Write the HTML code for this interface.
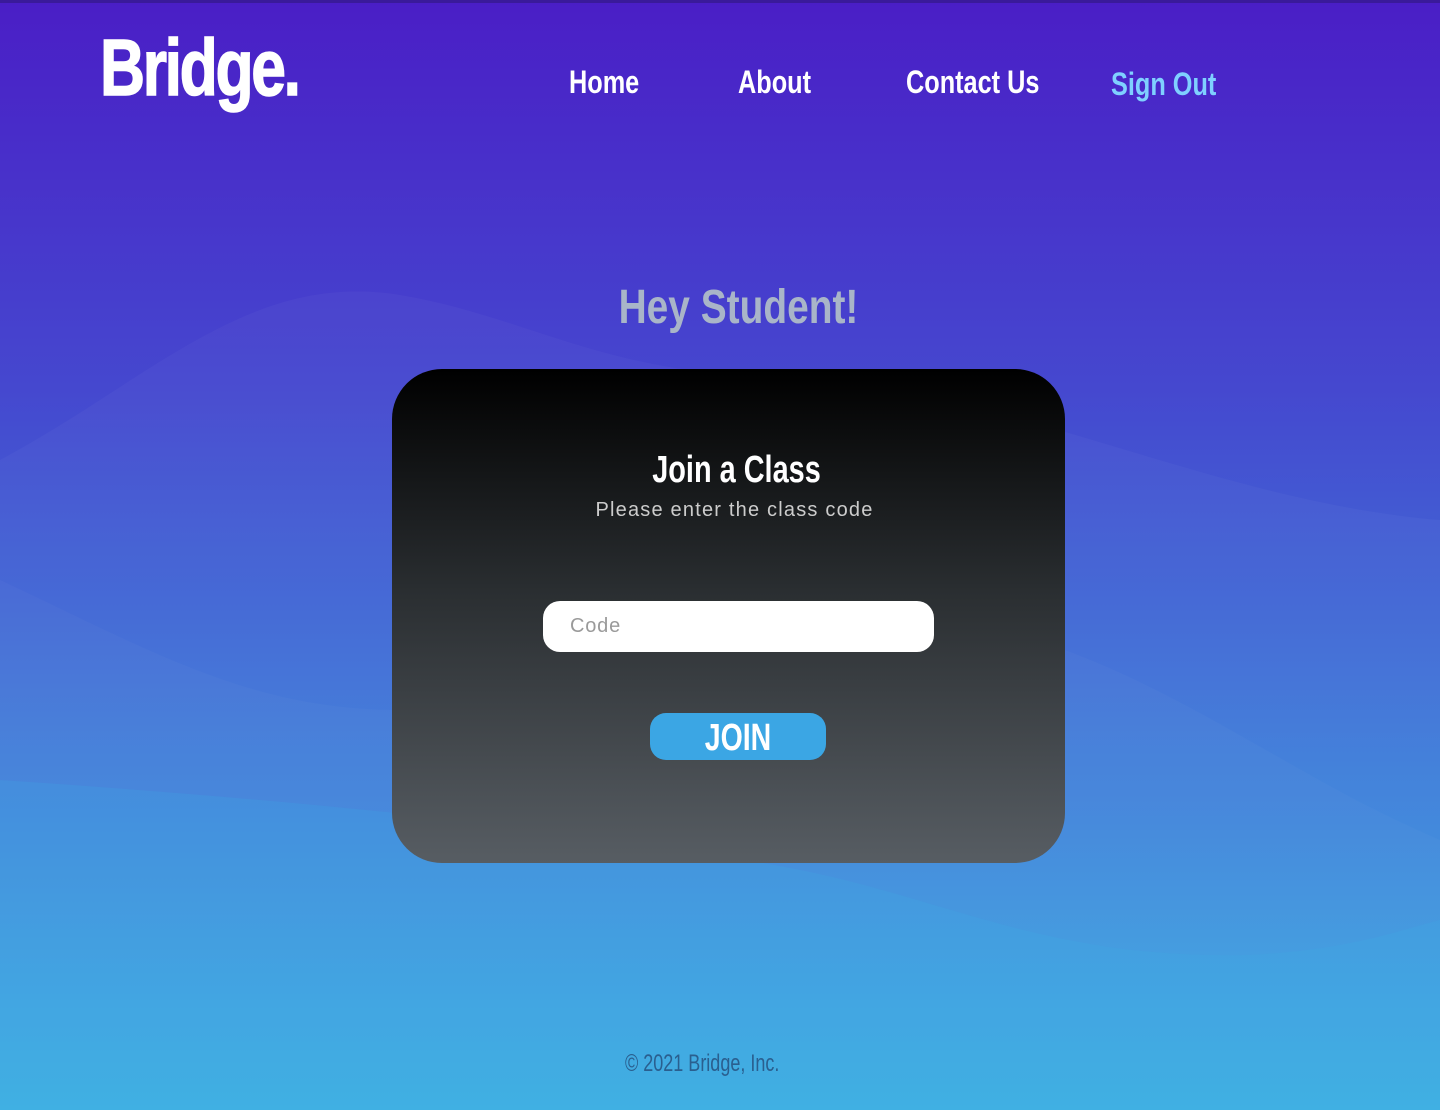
<!DOCTYPE html>
<html><head><meta charset="utf-8"><style>
html,body{margin:0;padding:0}
body{width:1440px;height:1110px;position:relative;overflow:hidden;
background:linear-gradient(180deg,#4a1ec6 0%,#4548cf 35%,#3f77d8 65%,#38aee3 100%);
font-family:"Liberation Sans Narrow","Liberation Sans",sans-serif;}
.topline{position:absolute;left:0;top:0;width:1440px;height:3px;background:#3a1a9a}
svg.w{position:absolute;left:0;top:0}
.c{position:absolute;white-space:nowrap}
.logo{left:100px;top:28px;font-size:80px;font-weight:bold;color:#fff;letter-spacing:-3px;transform:scaleX(.78);transform-origin:left top;line-height:1;-webkit-text-stroke:1.5px #fff}
.nav{top:66px;font-size:32px;font-weight:bold;color:#fff;transform:scaleX(.79);transform-origin:left top;line-height:1}
.hey{left:0;width:1477px;text-align:center;top:284px;font-size:48px;font-weight:bold;color:#a9b5c8;line-height:1;transform:scaleX(.81)}
.card{position:absolute;left:392px;top:369px;width:673px;height:494px;border-radius:50px;background:linear-gradient(180deg,#000 0%,#2a2e31 45%,#575d63 100%)}
.jt{left:400px;width:673px;text-align:center;top:451px;font-size:38px;font-weight:bold;color:#fff;line-height:1;transform:scaleX(.76)}
.sub{left:392px;width:685px;text-align:center;top:500px;font-size:20px;color:#ccc;font-family:"Liberation Sans",sans-serif;line-height:1;letter-spacing:1.2px}
.inp{position:absolute;left:543px;top:601px;width:391px;height:51px;background:#fff;border-radius:17px}
.ph{left:570px;top:616px;font-size:20px;color:#9a9a9a;font-family:"Liberation Sans",sans-serif;line-height:1;letter-spacing:.8px}
.btn{position:absolute;left:650px;top:713px;width:176px;height:47px;background:#3ba6e4;border-radius:16px}
.bt{left:650px;width:176px;text-align:center;top:719px;font-size:38px;font-weight:bold;color:#fff;line-height:1;transform:scaleX(.75)}
.ft{left:625px;top:1052px;font-size:24px;color:#2a5f8f;line-height:1;transform:scaleX(.75);transform-origin:left top}
</style></head><body>
<svg class="w" width="1440" height="1110">
<path d="M0 460 C150 380 250 270 400 295 C520 315 600 370 750 375 C1000 380 1200 500 1440 520 L1440 1110 L0 1110Z" fill="#ffffff" opacity=".03"/>
<path d="M0 580 C150 650 250 710 400 710 C700 710 900 600 1065 650 C1200 700 1300 780 1440 840 L1440 1110 L0 1110Z" fill="#ffffff" opacity=".025"/>
<path d="M0 780 C300 800 600 830 800 870 C950 900 1050 960 1250 955 C1350 950 1400 930 1440 920 L1440 1110 L0 1110Z" fill="#3bb0e6" opacity=".2"/>
</svg>
<div class="topline"></div>
<div class="c logo">Bridge.</div>
<div class="c nav" style="left:569px">Home</div>
<div class="c nav" style="left:738px">About</div>
<div class="c nav" style="left:906px">Contact Us</div>
<div class="c nav" style="left:1111px;top:68px;color:#7fd0ff">Sign Out</div>
<div class="c hey">Hey Student!</div>
<div class="card"></div>
<div class="c jt">Join a Class</div>
<div class="c sub">Please enter the class code</div>
<div class="inp"></div>
<div class="c ph">Code</div>
<div class="btn"></div>
<div class="c bt">JOIN</div>
<div class="c ft">© 2021 Bridge, Inc.</div>
</body></html>
